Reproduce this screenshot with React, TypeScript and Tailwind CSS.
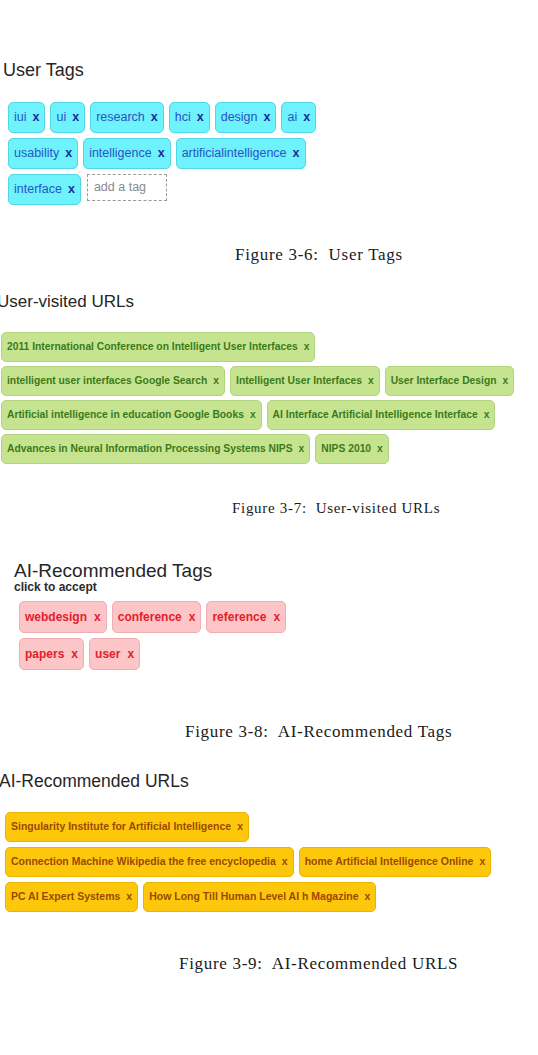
import React from "react";

const sans = { fontFamily: '"Liberation Sans", Arial, sans-serif' };
const serif = { fontFamily: '"Liberation Serif", "Times New Roman", serif' };

function CyanTag({ label }: { label: string }) {
  return (
    <div className="h-[31px] flex items-center gap-[6px] px-[5px] rounded-[5px] border border-[#52d5e4] bg-[#6ef3fc] text-[12.5px] leading-none text-[#2b52c8]">
      <span>{label}</span>
      <span className="font-bold text-[#1b2d9a]">x</span>
    </div>
  );
}

function GreenTag({ label }: { label: string }) {
  return (
    <div className="h-[30px] flex items-center gap-[6px] px-[5px] rounded-[5px] border border-[#b3d47e] bg-[#c6e48f] text-[10.3px] font-bold leading-none text-[#3b7a1b]">
      <span>{label}</span>
      <span>x</span>
    </div>
  );
}

function PinkTag({ label }: { label: string }) {
  return (
    <div className="h-[32px] flex items-center gap-[7px] px-[5px] rounded-[5px] border border-[#f0adb2] bg-[#fcc5c7] text-[12px] font-bold leading-none text-[#e3212b]">
      <span>{label}</span>
      <span>x</span>
    </div>
  );
}

function YellowTag({ label }: { label: string }) {
  return (
    <div className="h-[30px] flex items-center gap-[6px] px-[5px] rounded-[5px] border border-[#e9b300] bg-[#fdc80c] text-[10.5px] font-bold leading-none text-[#9c4800]">
      <span>{label}</span>
      <span>x</span>
    </div>
  );
}

export default function App() {
  return (
    <div className="w-[538px] h-[1055px] bg-white overflow-hidden" style={sans}>
      {/* User Tags */}
      <div className="pt-[61px] pl-[3px] text-[18px] leading-none text-[#262626]">User Tags</div>
      <div className="mt-[23px] pl-[8px] flex flex-col gap-[5px]">
        <div className="flex gap-[5px]">
          {["iui", "ui", "research", "hci", "design", "ai"].map((t) => (
            <CyanTag key={t} label={t} />
          ))}
        </div>
        <div className="flex gap-[5px]">
          {["usability", "intelligence", "artificialintelligence"].map((t) => (
            <CyanTag key={t} label={t} />
          ))}
        </div>
        <div className="flex gap-[6px] items-start">
          <CyanTag label="interface" />
          <div className="h-[27px] w-[80px] flex items-center pl-[6px] border border-dashed border-[#9a9a9a] text-[12.5px] leading-none text-[#8a8a8a]">
            add a tag
          </div>
        </div>
      </div>
      <div className="mt-[41px] pl-[235px] text-[17px] leading-none tracking-[0.7px] text-[#1a1a1a] whitespace-pre" style={serif}>
        {"Figure 3-6:  User Tags"}
      </div>

      {/* User-visited URLs */}
      <div className="mt-[30px] ml-[-3px] text-[17px] leading-none text-[#262626]">User-visited URLs</div>
      <div className="mt-[22px] pl-[1px] flex flex-col gap-[4px]">
        <div className="flex gap-[5px]">
          <GreenTag label="2011 International Conference on Intelligent User Interfaces" />
        </div>
        <div className="flex gap-[5px]">
          <GreenTag label="intelligent user interfaces Google Search" />
          <GreenTag label="Intelligent User Interfaces" />
          <GreenTag label="User Interface Design" />
        </div>
        <div className="flex gap-[5px]">
          <GreenTag label="Artificial intelligence in education Google Books" />
          <GreenTag label="AI Interface Artificial Intelligence Interface" />
        </div>
        <div className="flex gap-[5px]">
          <GreenTag label="Advances in Neural Information Processing Systems NIPS " />
          <GreenTag label="NIPS 2010" />
        </div>
      </div>
      <div className="mt-[37px] pl-[232px] text-[15px] leading-none tracking-[0.7px] text-[#1a1a1a] whitespace-pre" style={serif}>
        {"Figure 3-7:  User-visited URLs"}
      </div>

      {/* AI-Recommended Tags */}
      <div className="mt-[45px] pl-[14px] text-[19px] leading-none text-[#262626]">AI-Recommended Tags</div>
      <div className="mt-[1px] pl-[14px] text-[12px] font-bold leading-none text-[#2a2a2a]">click to accept</div>
      <div className="mt-[8px] pl-[19px] flex flex-col gap-[5px]">
        <div className="flex gap-[5px]">
          <PinkTag label="webdesign" />
          <PinkTag label="conference" />
          <PinkTag label="reference" />
        </div>
        <div className="flex gap-[5px]">
          <PinkTag label="papers" />
          <PinkTag label="user" />
        </div>
      </div>
      <div className="mt-[53px] pl-[185px] text-[17px] leading-none tracking-[0.7px] text-[#1a1a1a] whitespace-pre" style={serif}>
        {"Figure 3-8:  AI-Recommended Tags"}
      </div>

      {/* AI-Recommended URLs */}
      <div className="mt-[33px] ml-[-1px] text-[17.5px] leading-none text-[#262626]">AI-Recommended URLs</div>
      <div className="mt-[21px] pl-[5px] flex flex-col gap-[5px]">
        <div className="flex gap-[5px]">
          <YellowTag label="Singularity Institute for Artificial Intelligence" />
        </div>
        <div className="flex gap-[5px]">
          <YellowTag label="Connection Machine Wikipedia the free encyclopedia" />
          <YellowTag label="home Artificial Intelligence Online" />
        </div>
        <div className="flex gap-[5px]">
          <YellowTag label="PC AI Expert Systems" />
          <YellowTag label="How Long Till Human Level AI h Magazine" />
        </div>
      </div>
      <div className="mt-[43px] pl-[179px] text-[17px] leading-none tracking-[0.7px] text-[#1a1a1a] whitespace-pre" style={serif}>
        {"Figure 3-9:  AI-Recommended URLS"}
      </div>
    </div>
  );
}
